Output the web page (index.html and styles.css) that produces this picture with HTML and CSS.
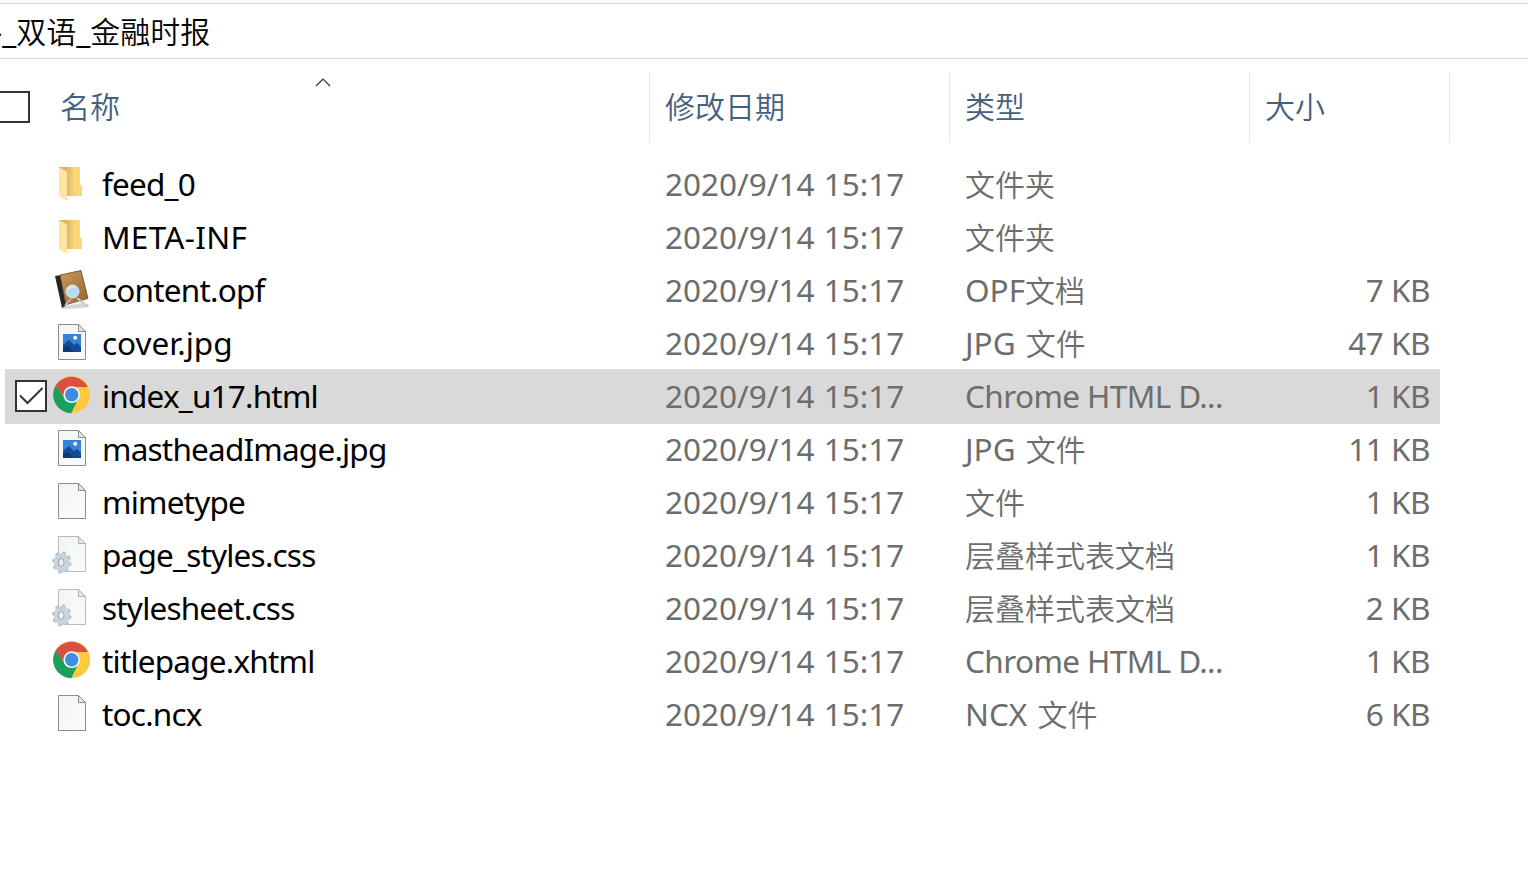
FILE: index.html
```
<!DOCTYPE html>
<html lang="zh-CN">
<head>
    <meta charset="UTF-8">
    <meta name="viewport" content="width=device-width, initial-scale=1.0">
    <title>双语_金融时报</title>
    <link rel="stylesheet" href="styles.css">
</head>
<body>
    <!-- file type icons -->
    <svg class="sprite" xmlns="http://www.w3.org/2000/svg">
        <defs>
            <linearGradient id="paper" x1="0" y1="0" x2="1" y2="1">
                <stop offset="0" stop-color="#f3f4f4"/>
                <stop offset="1" stop-color="#fbfbfb"/>
            </linearGradient>
            <linearGradient id="leather" x1="0" y1="0" x2="1" y2="1">
                <stop offset="0" stop-color="#c9985d"/>
                <stop offset="1" stop-color="#96652f"/>
            </linearGradient>
            <linearGradient id="fold" gradientUnits="userSpaceOnUse" x1="16" y1="0" x2="25" y2="0">
                <stop offset="0" stop-color="#dcb468"/>
                <stop offset="1" stop-color="#f8d877"/>
            </linearGradient>
        </defs>

        <symbol id="icon-folder" viewBox="0 0 40 40">
            <path d="M9 3h21v17l2 2v10H16L9 28z" fill="url(#fold)"/>
            <path d="M9 3.500l6.500 3q1.500 1 1.500 3V34l2 2-3 .5L9 32z" fill="#fde6a0"/>
        </symbol>

        <symbol id="icon-page" viewBox="0 0 40 40">
            <path d="M8.500 1.500h20l7 7v28h-27z" fill="url(#paper)" stroke="#8b8d8f"/>
            <path d="M28.500 1.500v7h7z" fill="#e2e4e5" stroke="#8b8d8f"/>
        </symbol>

        <symbol id="icon-image" viewBox="0 0 40 40">
            <use href="#icon-page"/>
            <path d="M13 11h18v18H13z" fill="#3184d8"/>
            <path d="M13 22l6-5 5 5 3-2 4 4v5H13z" fill="#124a93"/>
            <path d="M13 25l5-2 6 6H13z" fill="#0d3876"/>
            <circle cx="25.200" cy="14.800" r="2" fill="#fff"/>
        </symbol>

        <symbol id="icon-style" viewBox="0 0 40 40">
            <path d="M8.500 1.500h20l7 7v28h-27z" fill="url(#paper)" stroke="#b9bcbe"/>
            <path d="M28.500 1.500v7h7z" fill="#e2e4e5" stroke="#b0b3b5"/>
            <ellipse cx="11.800" cy="27.500" rx="8.200" ry="9.600" fill="none" stroke="#b3c0ca" stroke-width="3" stroke-dasharray="3.500 3.490"/>
            <ellipse cx="11.800" cy="27.500" rx="5.600" ry="7" fill="none" stroke="#c8d3dc" stroke-width="5"/>
            <ellipse cx="11.300" cy="27.500" rx="2.900" ry="4" fill="#eef1f3" stroke="#8a959e"/>
        </symbol>

        <symbol id="icon-book" viewBox="0 0 40 40">
            <path d="M10 36l24-3 6 2-6 3-20 1z" fill="#d6d6d6"/>
            <path d="M5 6l6-1 5 31-4 2z" fill="#272321"/>
            <path d="M10 5L31 .5l7 28L16 35z" fill="url(#leather)" stroke="#6d4822" stroke-width=".8"/>
            <path d="M13 37l25-6 .5-2L16 35z" fill="#f1efe9"/>
            <path d="M27 28l11 9" stroke="#c7c9ca" stroke-width="2"/>
            <path d="M21 29l-6 6" stroke="#c7c9ca" stroke-width="1.500"/>
            <circle cx="22.500" cy="21.500" r="6.500" fill="#b7dcf0" stroke="#dbe6ea" stroke-width="1"/>
            <path d="M18 20q3-5 7-3" fill="none" stroke="#d5ecf8" stroke-width="2"/>
        </symbol>

        <symbol id="icon-chrome" viewBox="0 0 40 40">
            <circle cx="21.700" cy="18.700" r="18.500" fill="#fec940"/>
            <path d="M21.700 18.700L5.700 9.400A18.500 18.500 0 0 1 37.700 10.700L38.300 10.900H21.700z" fill="#da4f42"/>
            <path d="M5.700 9.400A18.500 18.500 0 0 0 21.200 37.200L28.500 22.600l-6.800-3.900-6.800 3.900-8.700-13z" fill="#1a9f5c"/>
            <path d="M5.700 9.400L14.900 22.600 21.700 10.900z" fill="#da4f42"/>
            <circle cx="21.700" cy="18.700" r="8.400" fill="#f3f3f3"/>
            <circle cx="21.700" cy="18.700" r="6.700" fill="#3d8ee0"/>
        </symbol>
    </svg>

    <div class="explorer">
        <div class="address-bar">-_<span class="zh">双语</span>_<span class="zh">金融时报</span></div>

        <div class="list-header">
            <div class="select-all"></div>
            <div class="col col-name zh">名称
                <svg class="sort-arrow" viewBox="0 0 16 9"><path d="M1 8l7-7 7 7" fill="none" stroke="#333" stroke-width="1.200"/></svg>
            </div>
            <div class="col zh">修改日期</div>
            <div class="col zh">类型</div>
            <div class="col zh">大小</div>
        </div>

        <div class="file-list">
            <div class="file">
                <svg class="icon"><use href="#icon-folder"/></svg>
                <div class="name">feed_0</div>
                <div class="date">2020/9/14 15:17</div>
                <div class="type"><span class="zh">文件夹</span></div>
                <div class="size"></div>
            </div>
            <div class="file">
                <svg class="icon"><use href="#icon-folder"/></svg>
                <div class="name caps">META-INF</div>
                <div class="date">2020/9/14 15:17</div>
                <div class="type"><span class="zh">文件夹</span></div>
                <div class="size"></div>
            </div>
            <div class="file">
                <svg class="icon"><use href="#icon-book"/></svg>
                <div class="name">content.opf</div>
                <div class="date">2020/9/14 15:17</div>
                <div class="type">OPF<span class="zh">文档</span></div>
                <div class="size">7 KB</div>
            </div>
            <div class="file">
                <svg class="icon"><use href="#icon-image"/></svg>
                <div class="name short">cover.jpg</div>
                <div class="date">2020/9/14 15:17</div>
                <div class="type">JPG <span class="zh">文件</span></div>
                <div class="size">47 KB</div>
            </div>
            <div class="file selected">
                <svg class="check" viewBox="0 0 32 32"><path d="M1 1h30v30H1z" fill="#fff" stroke="#333" stroke-width="2"/><path d="M5 15.500l7.500 7.500L27.500 8" fill="none" stroke="#333" stroke-width="2"/></svg>
                <svg class="icon"><use href="#icon-chrome"/></svg>
                <div class="name">index_u17.html</div>
                <div class="date">2020/9/14 15:17</div>
                <div class="type long">Chrome HTML D...</div>
                <div class="size">1 KB</div>
            </div>
            <div class="file">
                <svg class="icon"><use href="#icon-image"/></svg>
                <div class="name">mastheadImage.jpg</div>
                <div class="date">2020/9/14 15:17</div>
                <div class="type">JPG <span class="zh">文件</span></div>
                <div class="size">11 KB</div>
            </div>
            <div class="file">
                <svg class="icon"><use href="#icon-page"/></svg>
                <div class="name">mimetype</div>
                <div class="date">2020/9/14 15:17</div>
                <div class="type"><span class="zh">文件</span></div>
                <div class="size">1 KB</div>
            </div>
            <div class="file">
                <svg class="icon"><use href="#icon-style"/></svg>
                <div class="name">page_styles.css</div>
                <div class="date">2020/9/14 15:17</div>
                <div class="type"><span class="zh">层叠样式表文档</span></div>
                <div class="size">1 KB</div>
            </div>
            <div class="file">
                <svg class="icon"><use href="#icon-style"/></svg>
                <div class="name">stylesheet.css</div>
                <div class="date">2020/9/14 15:17</div>
                <div class="type"><span class="zh">层叠样式表文档</span></div>
                <div class="size">2 KB</div>
            </div>
            <div class="file">
                <svg class="icon"><use href="#icon-chrome"/></svg>
                <div class="name">titlepage.xhtml</div>
                <div class="date">2020/9/14 15:17</div>
                <div class="type long">Chrome HTML D...</div>
                <div class="size">1 KB</div>
            </div>
            <div class="file">
                <svg class="icon"><use href="#icon-page"/></svg>
                <div class="name">toc.ncx</div>
                <div class="date">2020/9/14 15:17</div>
                <div class="type">NCX <span class="zh">文件</span></div>
                <div class="size">6 KB</div>
            </div>
        </div>
    </div>
</body>
</html>
```
FILE: styles.css
```
* {
    margin: 0;
    padding: 0;
    box-sizing: border-box;
}

body {
    height: 100vh;
    background: #fff;
    color: #000;
    font-family: 'Noto Sans', 'Noto Sans CJK SC', sans-serif;
    font-size: 31.5px;
    overflow: hidden;
}

.sprite {
    display: block;
    width: 0;
    height: 0;
}

.zh {
    font-family: 'Noto Sans CJK SC', sans-serif;
    font-size: 30px;
    font-weight: 350;
}

.explorer {
    padding-top: 3px;
}

.address-bar {
    height: 56px;
    margin-left: -8px;
    border-top: 1px solid #d9d9d9;
    border-bottom: 1px solid #d9d9d9;
    line-height: 52px;
    white-space: nowrap;
}

.list-header {
    display: grid;
    grid-template-columns: 30px 620px 300px 300px 200px;
    height: 98px;
    padding-top: 14px;
    color: #44607f;
}

.select-all {
    height: 32px;
    margin-top: 18px;
    border: 2px solid #333;
    border-left: none;
}

.col {
    height: 69px;
    padding-left: 15px;
    border-right: 1px solid #e5e5e5;
    line-height: 65px;
}

.col-name {
    position: relative;
    padding-left: 30px;
}

.sort-arrow {
    position: absolute;
    top: 5px;
    left: 285px;
    width: 16px;
    height: 9px;
}

.file {
    display: grid;
    grid-template-columns: 45px 52px 563px 300px 300px 165px;
    width: 1435px;
    height: 55px;
    margin: 0 0 -2px 5px;
    line-height: 53px;
    white-space: nowrap;
}

.file.selected {
    background: #d9d9d9;
}

.check {
    grid-column: 1;
    width: 32px;
    height: 32px;
    margin: 11px 0 0 10px;
}

.icon {
    grid-column: 2;
    width: 40px;
    height: 40px;
    margin-top: 7px;
}

.name {
    letter-spacing: -0.8px;
}

.name.caps {
    letter-spacing: 0.3px;
}

.name.short {
    letter-spacing: 0;
}

.date,
.type,
.size {
    color: #6d6d6d;
}

.date {
    word-spacing: 1px;
}

.type {
    word-spacing: 2px;
}

.type.long {
    letter-spacing: -0.6px;
    word-spacing: 0;
}

.size {
    letter-spacing: -0.5px;
    text-align: right;
}
```
